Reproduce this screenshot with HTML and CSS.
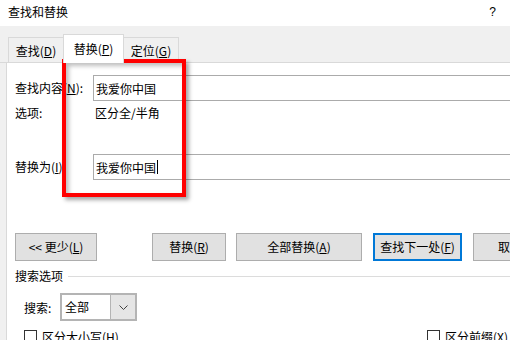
FILE: index.html
```html
<!DOCTYPE html>
<html lang="zh">
<head>
<meta charset="utf-8">
<title>查找和替换</title>
<link rel="stylesheet" href="styles.css">
</head>
<body>
<div class="window">
  <div class="titlebar"><span class="title">查找和替换</span><span class="help">?</span></div>
  <div class="tabs">
    <div class="tab">查找(<u>D</u>)</div>
    <div class="tab active">替换(<u>P</u>)</div>
    <div class="tab">定位(<u>G</u>)</div>
  </div>
  <div class="panel">
    <div class="field find-row">
      <span class="label">查找内容(<u>N</u>):</span>
      <div class="textbox">我爱你中国</div>
    </div>
    <div class="options-row">
      <span class="label">选项:</span>
      <span class="opt-value">区分全/半角</span>
    </div>
    <div class="field replace-row">
      <span class="label">替换为(<u>I</u>):</span>
      <div class="textbox">我爱你中国<span class="caret"></span></div>
    </div>
    <div class="buttons">
      <button class="btn less">&lt;&lt; 更少(<u>L</u>)</button>
      <button class="btn replace">替换(<u>R</u>)</button>
      <button class="btn replace-all">全部替换(<u>A</u>)</button>
      <button class="btn primary find-next">查找下一处(<u>F</u>)</button>
      <button class="btn cancel">取消</button>
    </div>
    <div class="section"><span class="section-title">搜索选项</span><span class="rule"></span></div>
    <div class="search-row">
      <span class="search-label">搜索<u>:</u></span>
      <div class="select">
        <span class="select-value">全部</span>
        <span class="select-arrow"><svg width="9" height="5" viewBox="0 0 9 5"><path d="M0.5 0.5 L4.5 4.5 L8.5 0.5" fill="none" stroke="#404040" stroke-width="1"/></svg></span>
      </div>
    </div>
    <div class="checks">
      <label class="check"><span class="box"></span>区分大小写(<u>H</u>)</label>
      <label class="check"><span class="box"></span>区分前缀(<u>X</u>)</label>
    </div>
  </div>
  <div class="highlight"></div>
</div>
</body>
</html>
```
FILE: styles.css
```css
* { box-sizing: border-box; }
html, body { margin: 0; padding: 0; overflow: hidden; }
body {
  width: 510px;
  height: 340px;
  font-family: "Noto Sans CJK SC", "Microsoft YaHei", sans-serif;
  font-size: 12px;
  color: #000;
  background: #f0f0f0;
}
u { text-decoration: underline; text-underline-offset: 1px; }
.window {
  position: relative;
  width: 510px;
  height: 340px;
  display: flex;
  flex-direction: column;
  overflow: hidden;
}
.titlebar {
  height: 26px;
  flex-shrink: 0;
  background: #fff;
  display: flex;
  justify-content: space-between;
  align-items: center;
  padding: 0 14px 2px 8px;
  line-height: 16px;
}
.help { font-family: "Liberation Sans", sans-serif; font-size: 12px; }
.tabs {
  height: 37px;
  flex-shrink: 0;
  display: flex;
  align-items: flex-end;
  padding-left: 8px;
  border-bottom: 1px solid #d9d9d9;
}
.tab {
  width: 56px;
  height: 25px;
  border: 1px solid #d9d9d9;
  border-bottom: none;
  text-align: center;
  line-height: 18px;
  padding-top: 4px;
  margin-left: -1px;
  background: #f0f0f0;
}
.tab:first-child { margin-left: 0; width: 56px; }
.tab.active {
  width: 61px;
  height: 29px;
  background: #fff;
  margin-bottom: -1px;
  padding-top: 5px;
  position: relative;
  z-index: 1;
}
.panel {
  flex: 1;
  background: #fff;
  margin-left: 6px;
  border-left: 1px solid #d9d9d9;
  padding-left: 8px;
  display: flex;
  flex-direction: column;
}
.field {
  display: grid;
  grid-template-columns: 78px 460px;
  align-items: center;
  height: 26px;
  flex-shrink: 0;
}
.find-row { margin-top: 12px; }
.replace-row { margin-top: 32px; }
.label { line-height: 18px; white-space: nowrap; }
.textbox {
  height: 26px;
  border: 1px solid #ababab;
  padding-left: 2px;
  line-height: 23px;
  display: flex;
  align-items: center;
}
.caret {
  display: inline-block;
  width: 1px;
  height: 14px;
  background: #000;
  margin-left: 1px;
}
.options-row {
  margin-top: 3px;
  height: 18px;
  line-height: 18px;
  display: grid;
  grid-template-columns: 80px auto;
}
.buttons {
  margin-top: 53px;
  display: flex;
  height: 28px;
  flex-shrink: 0;
}
.btn {
  flex-shrink: 0;
  height: 28px;
  border: 1px solid #adadad;
  background: #e1e1e1;
  font: inherit;
  color: #000;
  padding: 0;
  line-height: 24px;
  text-align: center;
}
.less { width: 82px; }
.replace { width: 74px; margin-left: 55px; }
.replace-all { width: 126px; margin-left: 10px; }
.find-next { width: 89px; margin-left: 11px; border: 2px solid #0078d7; }
.cancel { width: 74px; margin-left: 11px; }
.section {
  margin-top: 6px;
  height: 18px;
  display: flex;
  align-items: center;
  line-height: 18px;
}
.rule {
  flex: 1;
  height: 1px;
  background: #dcdcdc;
  margin-left: 5px;
}
.search-row {
  margin-top: 8px;
  padding-left: 9px;
  display: flex;
  align-items: center;
  height: 28px;
}
.search-label { width: 36px; }
.search-label u { text-decoration: none; }
.select {
  width: 77px;
  height: 28px;
  border: 2px solid #b4b4b4;
  display: flex;
  background: #fff;
}
.select-value { flex: 1; padding-left: 3px; line-height: 24px; }
.select-arrow {
  width: 25px;
  background: #e5e5e5;
  border-left: 1px solid #b4b4b4;
  display: flex;
  align-items: center;
  justify-content: center;
}
.checks {
  margin-top: 9px;
  padding-left: 9px;
  display: grid;
  grid-template-columns: 403px auto;
}
.check {
  display: flex;
  align-items: flex-start;
  line-height: 14px;
  white-space: nowrap;
}
.box {
  width: 13px;
  height: 13px;
  border: 1px solid #333;
  margin-right: 5px;
  background: #fff;
}
.highlight {
  position: absolute;
  left: 62px;
  top: 59px;
  width: 124px;
  height: 138px;
  border: 4px solid #ff0000;
  box-shadow: 3px 3px 4px rgba(0,0,0,0.35), inset 3px 3px 4px rgba(0,0,0,0.25);
  pointer-events: none;
}
```
